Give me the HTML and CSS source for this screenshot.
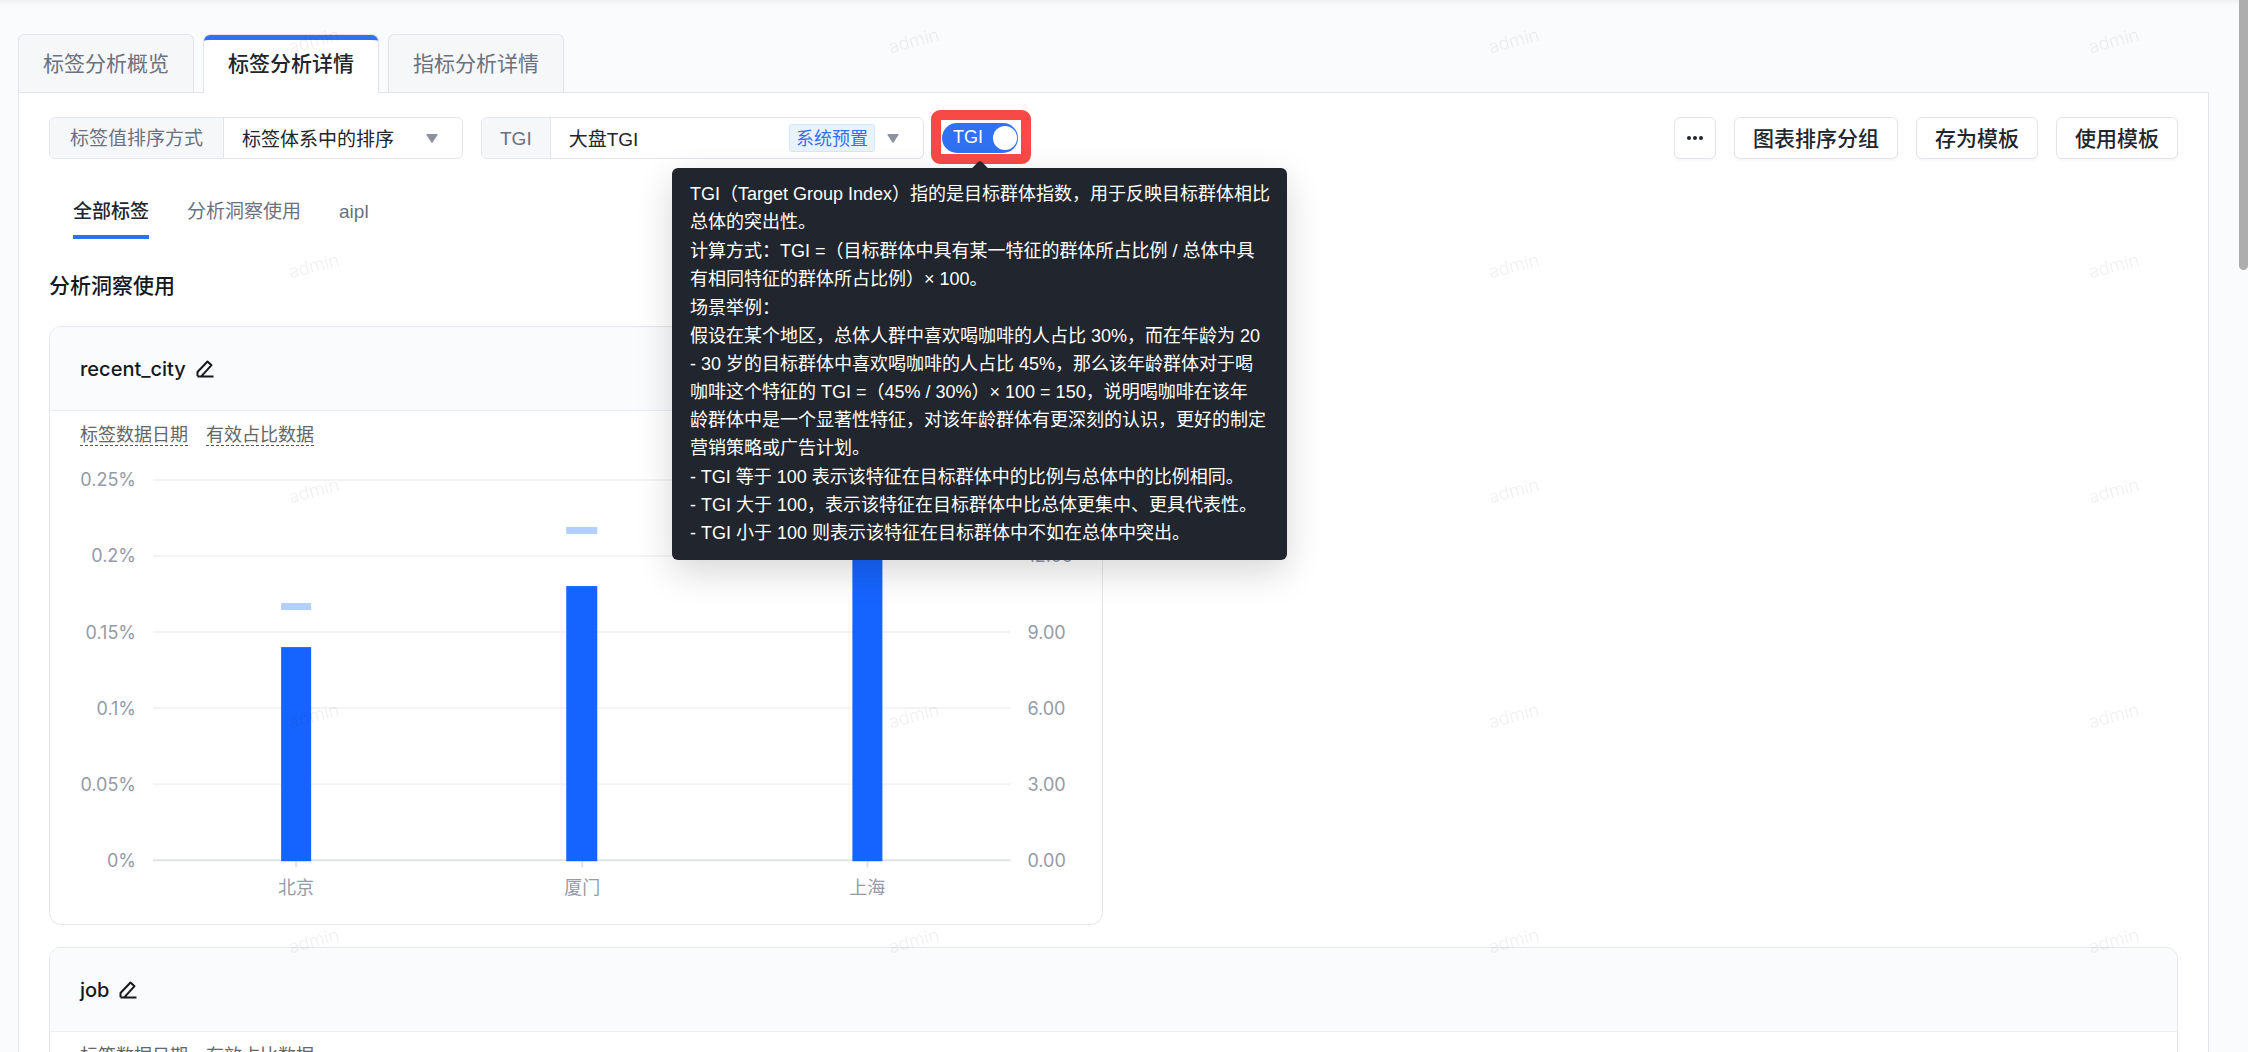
FILE: index.html
```html
<!DOCTYPE html>
<html lang="zh-CN">
<head>
<meta charset="utf-8">
<title>标签分析详情</title>
<link rel="stylesheet" href="styles.css">
</head>
<body>
<div class="app">
  <nav class="tabs">
    <a class="tab" href="#overview">标签分析概览</a>
    <a class="tab tab-active" href="#detail">标签分析详情</a>
    <a class="tab" href="#metric">指标分析详情</a>
  </nav>

  <main class="panel">
    <div class="toolbar">
      <div class="field field-sort">
        <label class="field-label" for="sort">标签值排序方式</label>
        <div class="field-control">
          <select id="sort"><option>标签体系中的排序</option></select>
          <svg class="caret" viewBox="0 0 12 9"><path d="M1 0h10q1 0 .5 1L6.800 8.300q-.8.900-1.600 0L.5 1Q0 0 1 0z"/></svg>
        </div>
      </div>
      <div class="field field-tgi">
        <label class="field-label" for="tgi">TGI</label>
        <div class="field-control">
          <select id="tgi"><option>大盘TGI</option></select>
          <span class="tag">系统预置</span>
          <svg class="caret" viewBox="0 0 12 9"><path d="M1 0h10q1 0 .5 1L6.800 8.300q-.8.900-1.600 0L.5 1Q0 0 1 0z"/></svg>
        </div>
      </div>
      <div class="switch-wrap">
        <label class="switch">
          <input type="checkbox" role="switch" checked>
          <span class="switch-text">TGI</span>
        </label>
        <div class="tooltip" role="tooltip">
          <p>TGI（Target Group Index）指的是目标群体指数，用于反映目标群体相比<br>总体的突出性。</p>
          <p>计算方式：TGI =（目标群体中具有某一特征的群体所占比例 / 总体中具<br>有相同特征的群体所占比例）× 100。</p>
          <p>场景举例：<br>假设在某个地区，总体人群中喜欢喝咖啡的人占比 30%，而在年龄为 20<br>- 30 岁的目标群体中喜欢喝咖啡的人占比 45%，那么该年龄群体对于喝<br>咖啡这个特征的 TGI =（45% / 30%）× 100 = 150，说明喝咖啡在该年<br>龄群体中是一个显著性特征，对该年龄群体有更深刻的认识，更好的制定<br>营销策略或广告计划。</p>
          <p>- TGI 等于 100 表示该特征在目标群体中的比例与总体中的比例相同。<br>- TGI 大于 100，表示该特征在目标群体中比总体更集中、更具代表性。<br>- TGI 小于 100 则表示该特征在目标群体中不如在总体中突出。</p>
        </div>
      </div>
      <div class="actions">
        <button class="btn btn-icon" type="button" aria-label="更多">
          <svg width="18" height="6" viewBox="0 0 18 6"><circle cx="3" cy="3" r="2"/><circle cx="9" cy="3" r="2"/><circle cx="15" cy="3" r="2"/></svg>
        </button>
        <button class="btn" type="button">图表排序分组</button>
        <button class="btn" type="button">存为模板</button>
        <button class="btn" type="button">使用模板</button>
      </div>
    </div>

    <nav class="subtabs">
      <a class="subtab subtab-active" href="#all">全部标签</a>
      <a class="subtab" href="#insight">分析洞察使用</a>
      <a class="subtab" href="#aipl">aipl</a>
    </nav>

    <h2 class="section-title">分析洞察使用</h2>

    <div class="cards">
      <section class="card">
        <header class="card-head">
          <h3>recent_city</h3>
          <button class="edit" type="button" aria-label="编辑">
            <svg viewBox="0 0 18 18"><path d="M1.500 16.500H17.500M1.500 16.200V12L11.500 1.500L15.500 5.200L5.500 16.200"/></svg>
          </button>
        </header>
        <div class="legend"><span>标签数据日期</span><span>有效占比数据</span></div>
        <svg class="chart" viewBox="0 0 1051 478" role="img" aria-label="recent_city">
          <g class="grid">
            <path d="M103 34H960M103 110H960M103 186H960M103 262H960M103 338H960"/>
          </g>
          <path class="axis" d="M103 414H960"/>
          <path class="tick" d="M246 415v6M532 415v6M817 415v6"/>
          <g class="bars">
            <rect x="231" y="201" width="30" height="214"/>
            <rect x="516" y="140" width="31" height="275"/>
            <rect x="802" y="79" width="30" height="336"/>
          </g>
          <g class="marks">
            <rect x="231" y="157" width="30" height="7"/>
            <rect x="516" y="81" width="31" height="7"/>
          </g>
          <g class="labels labels-left">
            <text x="86" y="40">0.25%</text>
            <text x="86" y="116">0.2%</text>
            <text x="86" y="193">0.15%</text>
            <text x="86" y="269">0.1%</text>
            <text x="86" y="345">0.05%</text>
            <text x="86" y="421">0%</text>
          </g>
          <g class="labels">
            <text x="977" y="116">12.00</text>
            <text x="977" y="193">9.00</text>
            <text x="977" y="269">6.00</text>
            <text x="977" y="345">3.00</text>
            <text x="977" y="421">0.00</text>
          </g>
          <g class="labels labels-mid">
            <text x="246" y="448">北京</text>
            <text x="532" y="448">厦门</text>
            <text x="817" y="448">上海</text>
          </g>
        </svg>
      </section>

      <section class="card card-wide">
        <header class="card-head">
          <h3>job</h3>
          <button class="edit" type="button" aria-label="编辑">
            <svg viewBox="0 0 18 18"><path d="M1.500 16.500H17.500M1.500 16.200V12L11.500 1.500L15.500 5.200L5.500 16.200"/></svg>
          </button>
        </header>
        <div class="legend"><span>标签数据日期</span><span>有效占比数据</span></div>
      </section>
    </div>
  </main>

  <svg class="watermark" aria-hidden="true">
    <defs>
      <pattern id="wm" width="600" height="225" patternUnits="userSpaceOnUse">
        <text x="314" y="47" text-anchor="middle" transform="rotate(-15 314 41)">admin</text>
      </pattern>
    </defs>
    <rect width="100%" height="100%" fill="url(#wm)"/>
  </svg>
  <div class="scroll-thumb"></div>
</div>
</body>
</html>
```
FILE: styles.css
```css
* { box-sizing: border-box; }

body {
  margin: 0;
  font-family: "Liberation Sans", "Noto Sans CJK SC", sans-serif;
  font-size: 19px;
  color: #21252d;
  background: #fafbfd;
}

a { color: inherit; text-decoration: none; }
h2, h3, p { margin: 0; }
button, select, input { font: inherit; color: inherit; margin: 0; }

.app {
  position: relative;
  height: 100vh;
  overflow: hidden;
  padding: 34px 39px 0 18px;
  background: linear-gradient(#f1f2f4, #fafbfd 6px);
}

/* page tabs */
.tabs { display: flex; gap: 9px; }
.tab {
  height: 58px;
  padding: 0 24px;
  border: 1px solid #e3e5ea;
  border-bottom: 0;
  border-radius: 6px 6px 0 0;
  background: #f6f7f9;
  font-size: 21px;
  line-height: 57px;
  color: #6b7180;
}
.tab-active {
  position: relative;
  height: 59px;
  margin-bottom: -1px;
  background: #fff;
  color: #21252d;
  font-weight: 500;
  z-index: 1;
}
.tab-active::before {
  content: "";
  position: absolute;
  inset: 0 0 auto;
  height: 8px;
  border-top: 5px solid #3071f2;
  border-radius: 6px 6px 0 0;
}

.panel {
  min-height: 100vh;
  padding: 24px 30px;
  border: 1px solid #e3e5ea;
  background: #fff;
}

/* toolbar */
.toolbar { display: flex; gap: 18px; height: 42px; }
.field {
  display: flex;
  border: 1px solid #e3e5ec;
  border-radius: 6px;
  overflow: hidden;
}
.field-sort { width: 414px; }
.field-tgi { width: 443px; }
.field-label {
  padding: 0 18px;
  border-right: 1px solid #e3e5ec;
  background: #f6f7f9;
  line-height: 42px;
  color: #6b7180;
  white-space: nowrap;
  text-align: center;
}
.field-sort .field-label { width: 174px; }
.field-control {
  flex: 1;
  display: flex;
  align-items: center;
  gap: 12px;
  padding: 0 24px 0 18px;
}
.field-control select {
  flex: 1;
  min-width: 0;
  height: 40px;
  padding: 2px 0 0;
  border: 0;
  background: none;
  appearance: none;
}
.caret { width: 12px; height: 9px; fill: #8b919f; }
.tag {
  padding: 2px 6px 0;
  border: 1px solid #d5e7fb;
  border-radius: 3px;
  background: #e9f3fe;
  font-size: 18px;
  line-height: 24px;
  color: #3071f2;
}

.switch-wrap { position: relative; align-self: center; height: 30px; }
.switch { position: relative; display: block; width: 76px; height: 30px; }
.switch::after {
  content: "";
  position: absolute;
  inset: -13px -13px -11px -11px;
  border: 10px solid #f74a46;
  border-radius: 9px;
}
.switch input {
  display: block;
  width: 76px;
  height: 30px;
  border-radius: 15px;
  background: #3071f2;
  appearance: none;
}
.switch input::before {
  content: "";
  position: absolute;
  top: 3px;
  right: 1px;
  width: 24px;
  height: 24px;
  border-radius: 50%;
  background: #fff;
}
.switch-text {
  position: absolute;
  top: 0;
  left: 11px;
  font-size: 18px;
  line-height: 28px;
  color: #fff;
}

.tooltip {
  position: absolute;
  top: 45px;
  left: 50%;
  z-index: 3;
  display: grid;
  gap: 1px;
  width: 615px;
  margin-left: -308px;
  padding: 12px 12px 13px 18px;
  border-radius: 6px;
  background: #21252d;
  box-shadow: 0 12px 36px rgba(0, 0, 0, .16);
  font-size: 18px;
  line-height: 28px;
  color: #fff;
}
.tooltip::before {
  content: "";
  position: absolute;
  top: -5px;
  left: 50%;
  width: 14px;
  height: 14px;
  margin-left: -7px;
  border-radius: 3px;
  background: #21252d;
  transform: rotate(45deg);
}

.actions { display: flex; gap: 18px; margin-left: auto; }
.btn {
  padding: 0 18px 2px;
  border: 1px solid #e2e4ea;
  border-radius: 6px;
  background: #fff;
  box-shadow: 0 2px 2px rgba(0, 0, 0, .03);
  font-size: 21px;
  font-weight: 500;
}
.btn-icon {
  display: flex;
  align-items: center;
  justify-content: center;
  width: 42px;
  padding: 0;
  fill: #21252d;
}

/* tag group tabs */
.subtabs { display: flex; gap: 38px; margin: 32px 24px 0; }
.subtab {
  height: 48px;
  line-height: 42px;
  color: #6b7180;
}
.subtab-active {
  border-bottom: 4px solid #3071f2;
  border-radius: 2px 2px 0 0;
  color: #21252d;
  font-weight: 500;
}

.section-title {
  margin: 32px 0 25px;
  font-size: 21px;
  font-weight: 500;
  line-height: 30px;
  color: #15181d;
}

/* chart cards */
.cards { display: grid; grid-template-columns: 1fr 1fr; gap: 22px; }
.card {
  border: 1px solid #e6e7ea;
  border-radius: 12px;
  overflow: hidden;
  background: #fff;
}
.card-wide { grid-column: 1 / -1; min-height: 600px; }
.card-head {
  display: flex;
  align-items: center;
  gap: 10px;
  height: 84px;
  padding: 0 30px;
  border-bottom: 1px solid #ebedf0;
  background: #fafbfd;
}
.card-head h3 {
  font-family: Inter, "Noto Sans CJK SC", sans-serif;
  font-size: 20px;
  font-weight: 500;
  color: #15181d;
}
.edit { display: flex; padding: 0; border: 0; background: none; }
.edit svg {
  width: 18px;
  height: 18px;
  fill: none;
  stroke: #15181d;
  stroke-width: 2;
  stroke-linejoin: round;
}
.legend {
  display: flex;
  gap: 18px;
  padding: 14px 30px 0;
  font-size: 18px;
  line-height: 20px;
  color: #666;
}
.legend span { border-bottom: 1px dashed #555; }

.chart { display: block; width: 100%; }
.grid, .axis, .tick { fill: none; stroke: #f2f3f5; stroke-width: 2; }
.axis, .tick { stroke: #e0e3ea; }
.bars { fill: #1664ff; }
.marks { fill: #b2cfff; }
.labels {
  font-family: Inter, "Noto Sans CJK SC", sans-serif;
  font-size: 18px;
  fill: #959aa9;
}
.labels-left { text-anchor: end; }
.labels-mid { text-anchor: middle; }

.watermark {
  position: absolute;
  inset: 0;
  z-index: 2;
  width: 100%;
  height: 100%;
  pointer-events: none;
}
.watermark text {
  font-family: Inter, sans-serif;
  font-size: 18px;
  font-weight: 300;
  fill: rgba(0, 0, 0, .06);
}

.scroll-thumb {
  position: absolute;
  top: 0;
  right: 0;
  z-index: 4;
  width: 9px;
  height: 270px;
  border-radius: 0 0 5px 5px;
  background: #adadad;
}
```
